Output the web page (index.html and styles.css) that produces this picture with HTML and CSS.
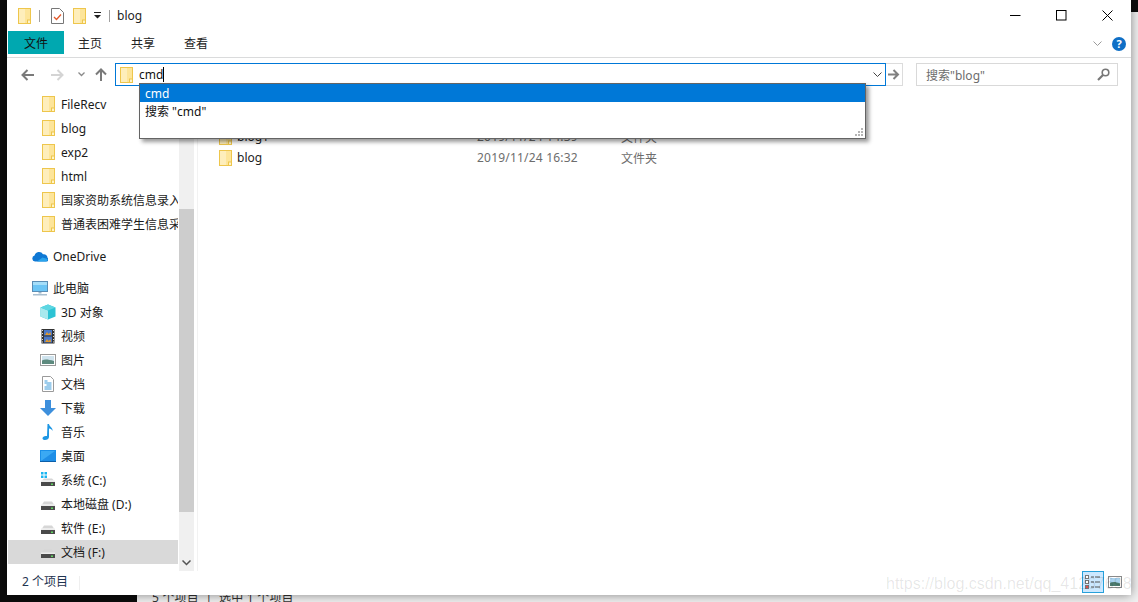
FILE: index.html
```html
<!DOCTYPE html>
<html lang="zh-CN">

<head>
    <meta charset="UTF-8">
    <title>blog</title>
    <link rel="stylesheet" href="styles.css">
</head>

<body>
    <svg class="defs" width="0" height="0">
        <symbol id="folder" viewBox="0 0 13 16">
            <rect x="0.5" y="0.5" width="12" height="15" fill="#fde59a" stroke="#eec64c"/>
            <rect x="1" y="1" width="6" height="14" fill="#feeebb"/>
            <rect x="9.500" y="12" width="3" height="3.500" fill="#fff4c8" stroke="#eec64c"/>
        </symbol>
        <symbol id="drive" viewBox="0 0 16 16">
            <path d="M2 8.500 4 5.500h8l2 3z" fill="#d6d6d6"/>
            <rect x="1" y="8.500" width="14" height="1.500" fill="#ececec"/>
            <rect x="1" y="10" width="14" height="4" fill="#4a4a4a"/>
            <rect x="11" y="11.500" width="2" height="1.500" fill="#5fd35f"/>
        </symbol>
    </svg>

    <div class="behind">
        <div class="behind-status">5 个项目 &nbsp;|&nbsp; 选中 1 个项目</div>
    </div>

    <div class="window">
        <div class="titlebar">
            <svg class="ico-folder"><use href="#folder"/></svg>
            <span class="tsep first"></span>
            <svg class="ico-check" width="13" height="16" viewBox="0 0 13 16">
                <path d="M.5.500h8l4 4v11H.5z" fill="#fff" stroke="#777"/>
                <path d="M3 9l2.500 2.500L10 6.500" fill="none" stroke="#e2592a" stroke-width="1.300"/>
            </svg>
            <svg class="ico-folder second"><use href="#folder"/></svg>
            <svg class="ico-drop" width="7" height="7" viewBox="0 0 7 7">
                <path d="M0 0h7v1H0zM0 3h7L3.500 6.500z" fill="#222"/>
            </svg>
            <span class="tsep"></span>
            <span class="title">blog</span>
            <div class="winbtns">
                <span class="winbtn"><svg width="11" height="11" viewBox="0 0 11 11"><path d="M0 5.500h10.500" stroke="#000"/></svg></span>
                <span class="winbtn"><svg width="11" height="11" viewBox="0 0 11 11"><rect x=".5" y=".5" width="9.500" height="9.500" fill="none" stroke="#000"/></svg></span>
                <span class="winbtn"><svg width="11" height="11" viewBox="0 0 11 11"><path d="M.5.500l10 10M10.500.500l-10 10" stroke="#000"/></svg></span>
            </div>
        </div>

        <div class="ribbon">
            <span class="tab active">文件</span>
            <span class="tab">主页</span>
            <span class="tab">共享</span>
            <span class="tab">查看</span>
            <svg class="ribbon-chev" width="9" height="6" viewBox="0 0 9 6"><path d="M.5.500l4 4 4-4" fill="none" stroke="#9a9a9a"/></svg>
            <span class="help">?</span>
        </div>

        <div class="addressrow">
            <div class="navbtns">
                <svg class="nav-back" width="13" height="12" viewBox="0 0 13 12"><path d="M13 6H2M6.500 1 1.500 6l5 5" fill="none" stroke="#7a7a7a" stroke-width="2"/></svg>
                <svg class="nav-fwd" width="13" height="12" viewBox="0 0 13 12"><path d="M0 6h11M6.500 1l5 5-5 5" fill="none" stroke="#d4d4d4" stroke-width="2"/></svg>
                <svg class="nav-down" width="7" height="5" viewBox="0 0 7 5"><path d="M.5.500l3 3 3-3" fill="none" stroke="#8a8a8a" stroke-width="1.300"/></svg>
                <svg class="nav-up" width="12" height="13" viewBox="0 0 12 13"><path d="M6 13V2M1 6.500l5-5 5 5" fill="none" stroke="#7a7a7a" stroke-width="2"/></svg>
            </div>
            <div class="addressbox">
                <svg class="ico-folder"><use href="#folder"/></svg>
                <span class="addr-text">cmd</span><span class="caret"></span>
                <svg class="addr-chev" width="9" height="6" viewBox="0 0 9 6"><path d="M.5.500l4 4 4-4" fill="none" stroke="#444"/></svg>
            </div>
            <div class="gobtn">
                <svg width="12" height="11" viewBox="0 0 12 11"><path d="M0 5.500h10M5.500 1l4.500 4.500L5.500 10" fill="none" stroke="#808080" stroke-width="2"/></svg>
            </div>
            <div class="searchbox">
                <span>搜索"blog"</span>
                <svg width="13" height="13" viewBox="0 0 13 13"><circle cx="8.500" cy="4.500" r="3.300" fill="none" stroke="#777" stroke-width="1.600"/><path d="M6 7 1 12" stroke="#777" stroke-width="2.200"/></svg>
            </div>
        </div>

        <div class="content">
            <div class="sidebar">
                <div class="tree">
                    <div class="row sub"><svg class="ico-folder"><use href="#folder"/></svg><span>FileRecv</span></div>
                    <div class="row sub"><svg class="ico-folder"><use href="#folder"/></svg><span>blog</span></div>
                    <div class="row sub"><svg class="ico-folder"><use href="#folder"/></svg><span>exp2</span></div>
                    <div class="row sub"><svg class="ico-folder"><use href="#folder"/></svg><span>html</span></div>
                    <div class="row sub"><svg class="ico-folder"><use href="#folder"/></svg><span>国家资助系统信息录入</span></div>
                    <div class="row sub"><svg class="ico-folder"><use href="#folder"/></svg><span>普通表困难学生信息采集</span></div>

                    <div class="row top group">
                        <svg class="ico16" viewBox="0 0 16 16"><path d="M3 13.500a3 3 0 0 1-.4-5.900 4.500 4.500 0 0 1 8.400-1.300 3.600 3.600 0 0 1 4.500 3.500 2.200 2.200 0 0 1-.5 3.700z" fill="#0f78d4"/><path d="M5 13.500l5.500-4 5 1.500a2.500 2.500 0 0 1-1.500 2.500z" fill="#2aa4ec"/></svg>
                        <span>OneDrive</span>
                    </div>

                    <div class="row top group">
                        <svg class="ico16" viewBox="0 0 16 16"><rect x=".5" y="1.500" width="15" height="10" fill="#6cc5f5" stroke="#5a8db5"/><rect x="1" y="2" width="14" height="3" fill="#a5def9"/><rect x="6.500" y="12" width="3" height="1.500" fill="#9db8cc"/><rect x="1" y="14" width="14" height="1.500" fill="#a9bfd0"/></svg>
                        <span>此电脑</span>
                    </div>
                    <div class="row lib">
                        <svg class="ico16" viewBox="0 0 16 16"><path d="M8 .5 15.500 3.500v9L8 15.500.5 12.500v-9z" fill="#2cc3d4"/><path d="M.5 3.500 8 6.500v9L.5 12.500z" fill="#a8e9ee"/><path d="M8 .5 15.500 3.500 8 6.500.5 3.500z" fill="#5ed6e2"/></svg>
                        <span>3D 对象</span>
                    </div>
                    <div class="row lib">
                        <svg class="ico16" viewBox="0 0 16 16"><rect x="1.500" y="1" width="13" height="14.500" fill="#333"/><rect x="4" y="2" width="8" height="5.500" fill="#4a78c8"/><rect x="4" y="8.500" width="8" height="6" fill="#4a78c8"/><path d="M5 7l2-3 1.500 2 2-2 .5 3zM5 14l2-3 1.500 2 2-2 .5 3z" fill="#e09a30"/><path d="M2.500 2v1M2.500 5v1M2.500 8v1M2.500 11v1M2.500 13.500v1M13.500 2v1M13.500 5v1M13.500 8v1M13.500 11v1M13.500 13.500v1" stroke="#ddd"/></svg>
                        <span>视频</span>
                    </div>
                    <div class="row lib">
                        <svg class="ico16" viewBox="0 0 16 16"><rect x=".5" y="2.500" width="15" height="11" fill="#fff" stroke="#9a9a9a"/><rect x="2" y="4" width="12" height="8" fill="#cfe3ee"/><path d="M2 8.500c3-1.500 6-1 12 .5v3H2z" fill="#5d8a7e"/></svg>
                        <span>图片</span>
                    </div>
                    <div class="row lib">
                        <svg class="ico16" viewBox="0 0 16 16"><path d="M2.500.5h8l3 3v12h-11z" fill="#fff" stroke="#9a9a9a"/><path d="M4.500 5h3M4.500 7h7M6.500 9h5M4.500 11h7M4.500 13h7" stroke="#3a9ad9"/></svg>
                        <span>文档</span>
                    </div>
                    <div class="row lib">
                        <svg class="ico16" viewBox="0 0 16 16"><path d="M5 0h6v8h5l-8 8-8-8h5z" fill="#3d8fdc"/></svg>
                        <span>下载</span>
                    </div>
                    <div class="row lib">
                        <svg class="ico16" viewBox="0 0 16 16"><path d="M7.500 0h1.500c.3 3 4 3.500 3.500 7-.6-1.500-1.800-2.300-3.500-2.500v8.500c0 2-2 3-4 3-1.500 0-2.500-.8-2.500-1.800 0-1.500 2-2.700 4.500-2.200z" fill="#1e97e4"/></svg>
                        <span>音乐</span>
                    </div>
                    <div class="row lib">
                        <svg class="ico16" viewBox="0 0 16 16"><rect x="0" y="2" width="16" height="12" fill="#1a8fe8"/><path d="M1 3h14v10H1z" fill="#3ba9f3"/><path d="M1 13 15 3v10z" fill="#1f8ee6"/><path d="M0 13.500h16" stroke="#0b5ea8"/></svg>
                        <span>桌面</span>
                    </div>
                    <div class="row lib">
                        <svg class="ico16" viewBox="0 0 16 16"><path d="M1 0h2.500v2.500H1zM4.500 0H7v2.500H4.500zM1 3.500h2.500V6H1zM4.500 3.500H7V6H4.500z" fill="#19b5f1"/><path d="M2 8.500 4 6.500h8l2 2z" fill="#d6d6d6"/><rect x="1" y="8.500" width="14" height="1.500" fill="#ececec"/><rect x="1" y="10" width="14" height="4" fill="#4a4a4a"/><rect x="11" y="11.500" width="2" height="1.500" fill="#5fd35f"/></svg>
                        <span>系统 (C:)</span>
                    </div>
                    <div class="row lib"><svg class="ico16"><use href="#drive"/></svg><span>本地磁盘 (D:)</span></div>
                    <div class="row lib"><svg class="ico16"><use href="#drive"/></svg><span>软件 (E:)</span></div>
                    <div class="row lib selected"><svg class="ico16"><use href="#drive"/></svg><span>文档 (F:)</span></div>
                </div>
                <div class="scrollbar">
                    <div class="thumb"></div>
                    <svg class="scroll-chev" width="9" height="6" viewBox="0 0 9 6"><path d="M.5.500l4 4 4-4" fill="none" stroke="#555" stroke-width="1.500"/></svg>
                </div>
            </div>

            <div class="files">
                <div class="file">
                    <span class="fname"><svg class="ico-folder"><use href="#folder"/></svg>blog1</span>
                    <span class="fdate">2019/11/24 14:39</span>
                    <span class="ftype">文件夹</span>
                </div>
                <div class="file">
                    <span class="fname"><svg class="ico-folder"><use href="#folder"/></svg>blog</span>
                    <span class="fdate">2019/11/24 16:32</span>
                    <span class="ftype">文件夹</span>
                </div>
            </div>
        </div>

        <div class="statusbar">
            <span class="count">2 个项目</span>
            <span class="ssep"></span>
            <div class="views">
                <span class="view on">
                    <svg width="16" height="14" viewBox="0 0 16 14"><rect x=".5" y=".5" width="3" height="3" fill="#fff" stroke="#777"/><rect x=".5" y="5.500" width="3" height="3" fill="#fff" stroke="#777"/><rect x=".5" y="10.500" width="3" height="3" fill="#e05050" stroke="#777"/><path d="M6 2h3M10 2h5M6 7h3M10 7h5M6 12h3M10 12h5" stroke="#555"/></svg>
                </span>
                <span class="view">
                    <svg width="14" height="12" viewBox="0 0 14 12"><rect x=".5" y=".5" width="13" height="11" fill="#fff" stroke="#8a8a8a"/><rect x="2" y="2" width="10" height="8" fill="#a9d3ef"/><path d="M2 7c3-1.500 6-1 10 .5V10H2z" fill="#4d7c70"/></svg>
                </span>
            </div>
        </div>

        <div class="popup">
            <div class="popup-item on">cmd</div>
            <div class="popup-item">搜索 "cmd"</div>
            <svg class="grip" width="8" height="8" viewBox="0 0 8 8"><path d="M6 0h2v2H6zM3 3h2v2H3zM6 3h2v2H6zM0 6h2v2H0zM3 6h2v2H3zM6 6h2v2H6z" fill="#b5b5b5"/></svg>
        </div>

        <div class="watermark">https://blog.csdn.net/qq_41267698</div>
    </div>
</body>

</html>
```

FILE: styles.css
```css
* {
    box-sizing: border-box;
}

html,
body {
    margin: 0;
    height: 602px;
    overflow: hidden;
}

body {
    position: relative;
    background-color: #0c0c0c;
    font-family: "Noto Sans", "Noto Sans CJK SC", sans-serif;
    font-size: 12px;
    color: #1a1a1a;
}

.defs {
    position: absolute;
}

svg {
    display: block;
    flex-shrink: 0;
}

.behind {
    position: absolute;
    left: 137px;
    top: 12px;
    right: 0;
    bottom: 0;
    background-color: #f0f0f0;
}

.behind-status {
    position: absolute;
    left: 15px;
    top: 576px;
    color: #333;
    letter-spacing: 0.2px;
}

.window {
    position: absolute;
    left: 7px;
    top: 0;
    width: 1124px;
    height: 595px;
    background-color: #fff;
    box-shadow: 0 0 10px rgba(0, 0, 0, 0.45);
    display: flex;
    flex-direction: column;
}

.ico-folder {
    width: 13px;
    height: 16px;
}

.ico16 {
    width: 16px;
    height: 16px;
}

/* titelbar */
.titlebar {
    height: 31px;
    display: flex;
    align-items: center;
    padding-left: 11px;
}

.tsep {
    width: 1px;
    height: 12px;
    background-color: #a0a0a0;
    margin: 0 7px 0 8px;
}

.tsep.first {
    margin: 0 11px 0 8px;
}

.ico-folder.second {
    margin-left: 9px;
}

.ico-drop {
    margin-left: 8px;
}

.title {
    font-size: 12px;
    color: #222;
}

.winbtns {
    margin-left: auto;
    padding-right: 1px;
    display: flex;
}

.winbtn {
    width: 46px;
    height: 31px;
    display: flex;
    align-items: center;
    justify-content: center;
}

/* ribbon */
.ribbon {
    height: 27px;
    display: flex;
    align-items: flex-start;
    padding-left: 1px;
    padding-right: 5px;
    border-bottom: 1px solid #dadbdc;
}

.tab {
    width: 53px;
    height: 23px;
    line-height: 26px;
    padding-left: 14px;
    color: #222;
}

.tab.active {
    width: 56px;
    padding-left: 16px;
    background-color: #00a8b0;
    color: #111;
}

.ribbon-chev {
    margin-left: auto;
    margin-top: 10px;
}

.help {
    width: 14px;
    height: 14px;
    margin-left: 10px;
    margin-top: 6px;
    border-radius: 50%;
    background-color: #0f6fc6;
    color: #fff;
    font-weight: bold;
    font-size: 11px;
    line-height: 14px;
    text-align: center;
}

/* adressefelt */
.addressrow {
    height: 32px;
    display: flex;
    align-items: flex-start;
    padding-top: 5px;
}

.navbtns {
    width: 108px;
    height: 23px;
    display: flex;
    align-items: center;
    padding-left: 14px;
}

.nav-fwd {
    margin-left: 17px;
}

.nav-down {
    margin-left: 14px;
}

.nav-up {
    margin-left: 10px;
}

.addressbox {
    width: 771px;
    height: 23px;
    border: 1px solid #0078d7;
    display: flex;
    align-items: center;
    padding-left: 4px;
}

.addr-text {
    margin-left: 6px;
    color: #111;
}

.caret {
    width: 1px;
    height: 15px;
    background-color: #000;
}

.addr-chev {
    margin-left: auto;
    margin-right: 3px;
}

.gobtn {
    width: 17px;
    height: 23px;
    border: 1px solid #dcdcdc;
    border-left: none;
    display: flex;
    align-items: center;
    justify-content: center;
}

.searchbox {
    width: 202px;
    height: 23px;
    margin-left: 13px;
    border: 1px solid #d9d9d9;
    display: flex;
    align-items: center;
    justify-content: space-between;
    padding: 0 7px 0 9px;
    color: #6d6d6d;
}

/* innhold */
.content {
    flex: 1;
    display: flex;
    min-height: 0;
}

.sidebar {
    width: 191px;
    display: flex;
    border-right: 1px solid #f2f2f2;
}

.tree {
    width: 172px;
    padding-top: 2px;
    padding-left: 1px;
}

.row {
    height: 24px;
    width: 170px;
    display: flex;
    align-items: center;
    white-space: nowrap;
    overflow: hidden;
}

.row.sub {
    padding-left: 34px;
    gap: 6px;
}

.row.top {
    padding-left: 24px;
    gap: 5px;
}

.row.group {
    margin-top: 8px;
}

.row.lib {
    padding-left: 32px;
    gap: 5px;
}

.row.selected {
    background-color: #d9d9d9;
}

.scrollbar {
    width: 15px;
    background-color: #f0f0f0;
    padding-top: 119px;
    position: relative;
}

.thumb {
    height: 303px;
    background-color: #cdcdcd;
}

.scroll-chev {
    position: absolute;
    left: 3px;
    bottom: 5px;
}

.files {
    flex: 1;
    padding: 36px 0 0 21px;
}

.file {
    height: 21px;
    display: grid;
    grid-template-columns: 258px 144px 80px;
    align-items: center;
}

.fname {
    display: flex;
    align-items: center;
    gap: 5px;
    color: #222;
}

.fdate,
.ftype {
    color: #6d6d6d;
}

.fdate {
    letter-spacing: 0.2px;
}

/* statuslinje */
.statusbar {
    height: 24px;
    display: flex;
    align-items: center;
    padding-left: 15px;
    color: #1f3450;
}

.count {
    line-height: 22px;
    margin-bottom: 2px;
}

.ssep {
    width: 1px;
    height: 14px;
    background-color: #efefef;
    margin-left: 11px;
}

.views {
    margin-left: auto;
    margin-right: 9px;
    display: flex;
    gap: 3px;
    align-self: flex-start;
}

.view {
    width: 15px;
    height: 22px;
    display: flex;
    align-items: center;
    justify-content: center;
}

.view.on {
    width: 22px;
    background-color: #cce8ff;
    border: 1px solid #26a0da;
}

/* forslagsliste */
.popup {
    position: absolute;
    left: 132px;
    top: 83px;
    width: 727px;
    height: 56px;
    background-color: #fff;
    border: 1px solid #646464;
    box-shadow: 3px 3px 4px rgba(0, 0, 0, 0.4);
}

.popup-item {
    height: 18px;
    line-height: 20px;
    padding-left: 5px;
    color: #111;
}

.popup-item.on {
    background-color: #0078d7;
    color: #fff;
}

.grip {
    position: absolute;
    right: 2px;
    bottom: 2px;
}

.watermark {
    position: absolute;
    left: 879px;
    top: 575px;
    font-family: "Liberation Sans", sans-serif;
    font-size: 16px;
    color: rgba(0, 0, 0, 0.1);
    white-space: nowrap;
}
```
